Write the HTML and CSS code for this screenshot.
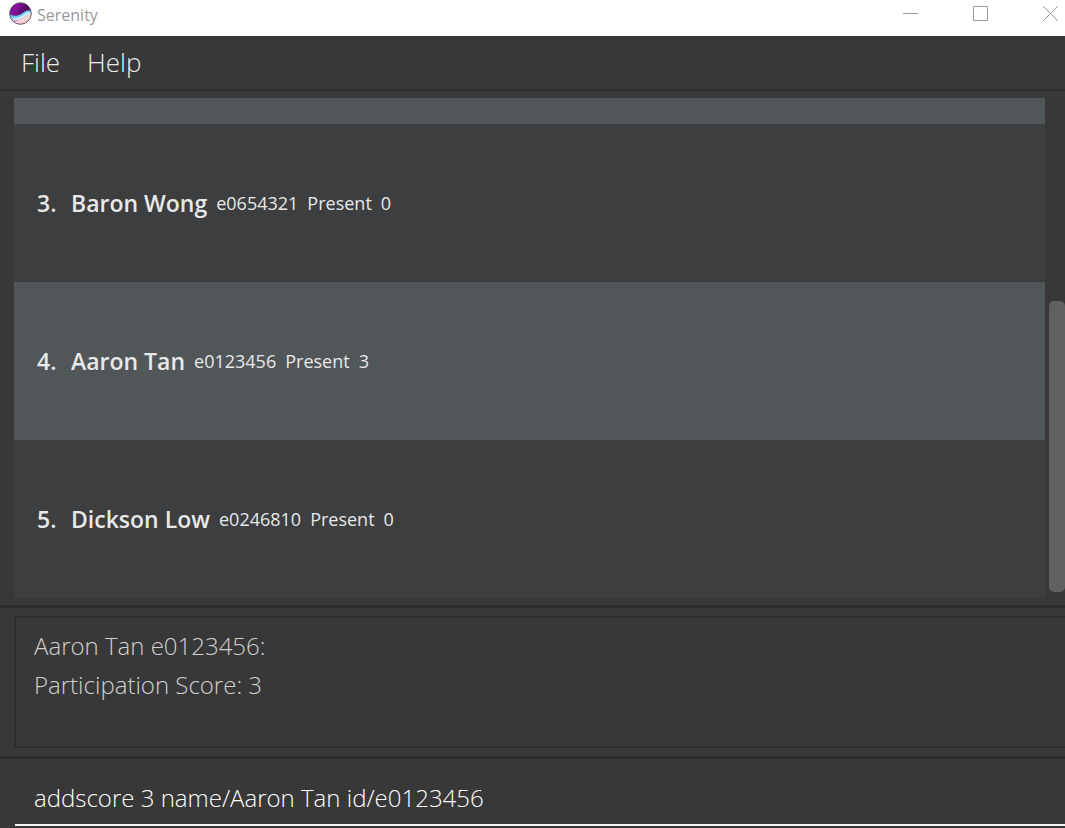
FILE: index.html
```html
<!DOCTYPE html>
<html lang="en">
<head>
<meta charset="utf-8">
<title>Serenity</title>
<link rel="stylesheet" href="styles.css">
</head>
<body>
<div class="window">
  <header class="titlebar">
    <svg class="logo" viewBox="0 0 22 22" aria-hidden="true">
      <defs>
        <clipPath id="disc"><circle cx="11" cy="11" r="10.3"/></clipPath>
        <linearGradient id="sky" x1="0" y1="0" x2="1" y2=".5">
          <stop offset="0" stop-color="#6a1688"/><stop offset=".35" stop-color="#8a12a0"/><stop offset=".75" stop-color="#4a0a5a"/><stop offset="1" stop-color="#5a1470"/>
        </linearGradient>
        <linearGradient id="sand" x1="0" y1="0" x2="1" y2=".2">
          <stop offset="0" stop-color="#b58fe0"/><stop offset=".5" stop-color="#f2b4d4"/><stop offset="1" stop-color="#f6dcb8"/>
        </linearGradient>
      </defs>
      <g clip-path="url(#disc)">
        <rect width="22" height="22" fill="url(#sky)"/>
        <path d="M0 11C4 14.500 9 13.500 13 10.500S18 8 22 8.500V22H0Z" fill="#6fc8f0"/>
        <path d="M0 14C5 17 10 15 14 12S19 10 22 10V22H0Z" fill="#c9ecfa"/>
        <path d="M0 15C6 18.500 11 17 14 14.500S19 12 22 12V22H0Z" fill="url(#sand)"/>
        <path d="M7 20C12 19 14 17 20 13" fill="none" stroke="#fbe9ee"/>
      </g>
      <circle cx="11" cy="11" r="10.300" fill="none" stroke="#55445f" stroke-width=".8"/>
    </svg>
    <h1 class="title">Serenity</h1>
    <div class="controls">
      <button class="control" aria-label="Minimize"><svg viewBox="0 0 15 15"><path d="M0 7.500H15"/></svg></button>
      <button class="control" aria-label="Maximize"><svg viewBox="0 0 15 15"><path d="M.5.500H14.500V14.500H.5Z"/></svg></button>
      <button class="control" aria-label="Close"><svg viewBox="0 0 15 15"><path d="M0 0L15 15M15 0L0 15"/></svg></button>
    </div>
  </header>
  <nav class="menubar">
    <button class="menu">File</button>
    <button class="menu">Help</button>
  </nav>
  <main class="list-pane">
    <div class="list">
      <div class="row row-alt"></div>
      <div class="row"><span class="index">3.</span><span class="name">Baron Wong</span><span class="detail">e0654321</span><span class="detail">Present</span><span class="detail">0</span></div>
      <div class="row row-alt"><span class="index">4.</span><span class="name">Aaron Tan</span><span class="detail">e0123456</span><span class="detail">Present</span><span class="detail">3</span></div>
      <div class="row"><span class="index">5.</span><span class="name">Dickson Low</span><span class="detail">e0246810</span><span class="detail">Present</span><span class="detail">0</span></div>
    </div>
    <div class="track"><div class="thumb"></div></div>
  </main>
  <section class="result-pane">
    <output class="result">Aaron Tan e0123456:<br>Participation Score: 3</output>
  </section>
  <footer class="command-pane">
    <input class="command" type="text" aria-label="Command" value="addscore 3 name/Aaron Tan id/e0123456">
  </footer>
</div>
</body>
</html>
```
FILE: styles.css
```css
* { box-sizing: border-box; }
body {
  margin: 0;
  background: #383838;
  font-family: "Open Sans", "Noto Sans", sans-serif;
}
button { padding: 0; border: 0; background: none; font: inherit; color: inherit; }
.window { display: flex; flex-direction: column; height: 100vh; overflow: hidden; }
.titlebar {
  display: flex;
  align-items: flex-start;
  flex: none;
  height: 36px;
  padding-left: 9px;
  background: #fff;
}
.logo { width: 23px; height: 23px; margin-top: 2px; }
.title { margin: 3px 0 0 5px; font-size: 16px; line-height: 24px; font-weight: 400; color: #999; }
.controls { display: flex; gap: 55px; margin: 6px 7px 0 auto; }
.control { display: flex; width: 15px; height: 15px; }
.control svg { width: 15px; height: 15px; fill: none; stroke: #999; }
.menubar {
  display: flex;
  flex: none;
  gap: 27px;
  height: 55px;
  padding: 0 21px 2px;
  border-bottom: 2px solid #2d2d2d;
  font-size: 26px;
  font-weight: 300;
  color: #ececec;
}
.list-pane { display: flex; flex: 1; min-height: 0; padding: 7px 0 7px 14px; }
.list {
  display: flex;
  flex: 1;
  flex-direction: column;
  justify-content: flex-end;
  overflow: hidden;
}
.row {
  display: flex;
  flex: none;
  align-items: center;
  height: 158px;
  padding-left: 23px;
  background: #3c3e3f;
  color: #e8e8e8;
}
.row-alt { background: #515658; }
.index { width: 34px; font-size: 23px; font-weight: 600; }
.name { font-size: 23px; font-weight: 600; }
.detail { margin-left: 9px; font-size: 18px; }
.track { display: flex; flex-direction: column; justify-content: flex-end; width: 20px; padding: 0 0 6px 4px; }
.thumb { height: 59%; border-radius: 5px; background: #606060; }
.result-pane {
  flex: none;
  padding: 8px 0 8px 14px;
  border-top: 3px solid #2d2d2d;
  border-bottom: 3px solid #2d2d2d;
}
.result {
  display: block;
  height: 132px;
  padding: 8px 18px;
  border: 2px solid #2d2d2d;
  border-right: 0;
  font-size: 24px;
  font-weight: 300;
  line-height: 39px;
  color: #d0d0d0;
}
.command-pane { flex: none; padding: 11px 0 2px 15px; }
.command {
  display: block;
  width: 100%;
  height: 56px;
  padding: 0 19px;
  border: 0;
  border-bottom: 2px solid #f4f4f4;
  outline: 0;
  background: none;
  font: 300 24px "Open Sans", "Noto Sans", sans-serif;
  color: #fff;
}
```
